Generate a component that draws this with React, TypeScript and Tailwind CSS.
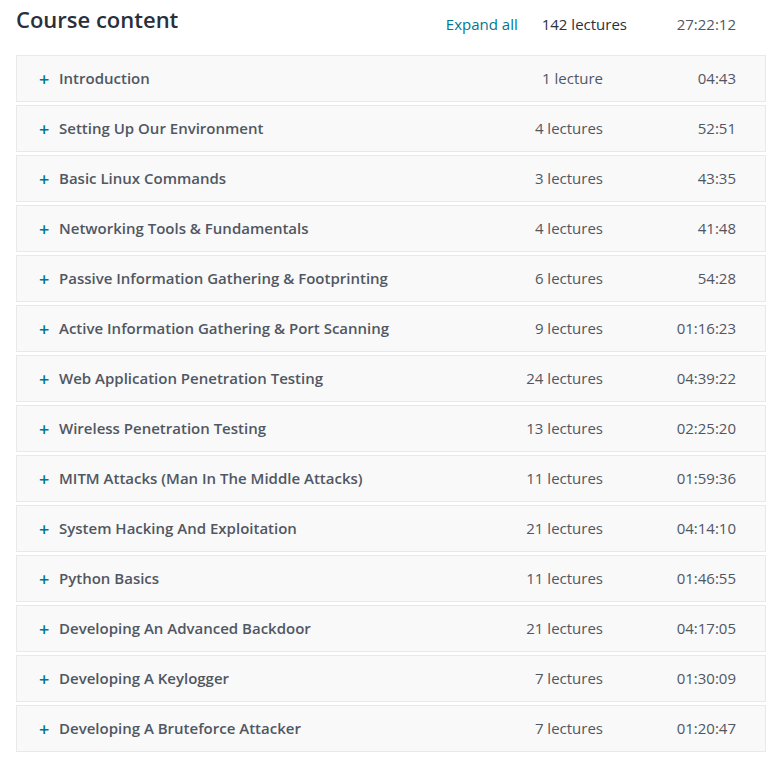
const sections = [
  { title: "Introduction", lectures: "1 lecture", time: "04:43" },
  { title: "Setting Up Our Environment", lectures: "4 lectures", time: "52:51" },
  { title: "Basic Linux Commands", lectures: "3 lectures", time: "43:35" },
  { title: "Networking Tools & Fundamentals", lectures: "4 lectures", time: "41:48" },
  { title: "Passive Information Gathering & Footprinting", lectures: "6 lectures", time: "54:28" },
  { title: "Active Information Gathering & Port Scanning", lectures: "9 lectures", time: "01:16:23" },
  { title: "Web Application Penetration Testing", lectures: "24 lectures", time: "04:39:22" },
  { title: "Wireless Penetration Testing", lectures: "13 lectures", time: "02:25:20" },
  { title: "MITM Attacks (Man In The Middle Attacks)", lectures: "11 lectures", time: "01:59:36" },
  { title: "System Hacking And Exploitation", lectures: "21 lectures", time: "04:14:10" },
  { title: "Python Basics", lectures: "11 lectures", time: "01:46:55" },
  { title: "Developing An Advanced Backdoor", lectures: "21 lectures", time: "04:17:05" },
  { title: "Developing A Keylogger", lectures: "7 lectures", time: "01:30:09" },
  { title: "Developing A Bruteforce Attacker", lectures: "7 lectures", time: "01:20:47" },
];

export default function App() {
  return (
    <div
      className="min-h-screen bg-white pl-4 pt-[5px]"
      style={{ fontFamily: "'Open Sans', sans-serif" }}
    >
      <div className="w-[750px]">
        {/* Header */}
        <div className="flex items-start h-[30px]">
          <h2 className="flex-1 text-[22px] font-semibold text-[#29303b] leading-[28px]">
            Course content
          </h2>
          <div className="flex pt-[8px] text-[15px] leading-[22px]">
            <span className="text-[#007791]">Expand all</span>
            <span className="ml-6 text-[#29303b]">142 lectures</span>
            <span className="w-[139px] pr-[30px] text-right text-[#505763]">27:22:12</span>
          </div>
        </div>

        {/* Sections */}
        <div className="mt-5 flex flex-col gap-[3px]">
          {sections.map((s) => (
            <div
              key={s.title}
              className="flex items-center h-[47px] border border-[#e8e9eb] bg-[#f9f9f9] pl-[22px]"
            >
              <span className="text-[18px] font-semibold text-[#007791] leading-none w-[20px]">
                +
              </span>
              <span className="flex-1 text-[15px] font-semibold text-[#505763]">
                {s.title}
              </span>
              <span className="text-[15px] text-[#505763]">{s.lectures}</span>
              <span className="w-[162px] pr-[29px] text-right text-[15px] text-[#505763]">
                {s.time}
              </span>
            </div>
          ))}
        </div>
      </div>
    </div>
  );
}
